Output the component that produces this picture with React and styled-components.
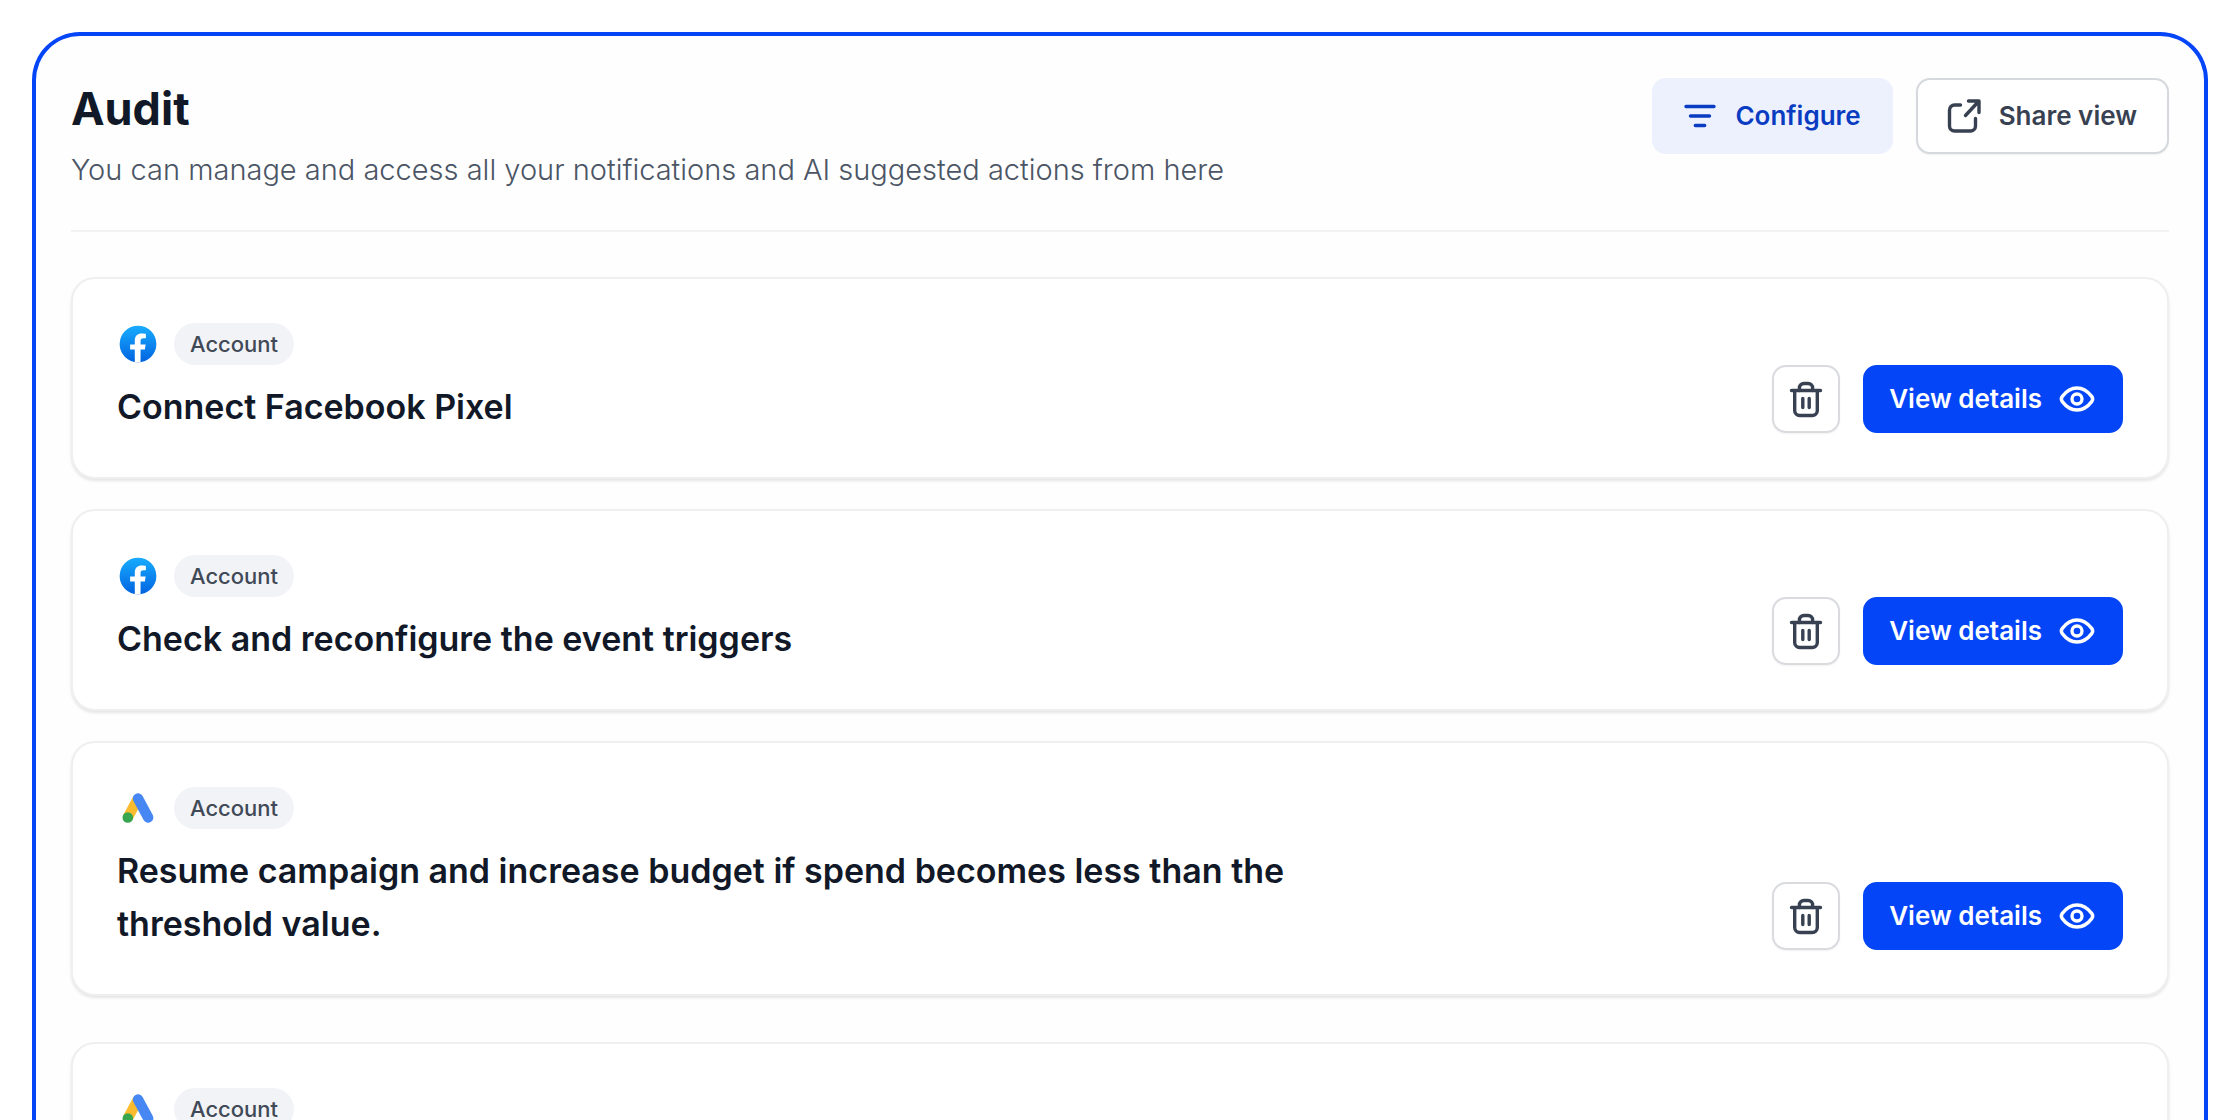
import {useState} from 'react';

import styled, {createGlobalStyle, css} from 'styled-components';

const GlobalStyle = createGlobalStyle`
  *, *::before, *::after {
    box-sizing: border-box;
  }

  body {
    margin: 0;
    background: #ffffff;
    color: #111827;
    font-family: Inter, "Liberation Sans", sans-serif;
  }
`;

const Page = styled.div`
  height: 100vh;
  padding: 32px 32px 0;
  overflow: hidden;
`;

const Frame = styled.main`
  height: 100%;
  padding: 42px 35px 0;
  border: 4px solid #0345f7;
  border-bottom: 0;
  border-radius: 48px 48px 0 0;
  background: #fefefe;
  overflow: hidden;
`;

const Header = styled.header`
  display: flex;
  align-items: flex-start;
  justify-content: space-between;
  gap: 32px;
  padding-bottom: 40px;
  border-bottom: 2px solid #f1f2f3;
`;

const PageTitle = styled.h1`
  margin: 0;
  font-size: 45px;
  line-height: 62px;
  font-weight: 700;
`;

const Subtitle = styled.p`
  margin: 10px 0 0;
  color: #4b5565;
  font-size: 29px;
  line-height: 40px;
  font-weight: 300;
`;

const HeaderActions = styled.div`
  display: flex;
  flex-shrink: 0;
  gap: 23px;
`;

const Button = styled.button`
  display: inline-flex;
  align-items: center;
  justify-content: center;
  gap: 15px;
  height: 68px;
  padding: 0 24px;
  border: 2px solid transparent;
  border-radius: 14px;
  font-family: inherit;
  font-size: 26px;
  line-height: 36px;
  font-weight: 600;
  white-space: nowrap;
  cursor: pointer;

  ${props => props.$variant === 'primary' && css`
    background: #0345f7;
    border-color: #0345f7;
    color: #ffffff;
  `}

  ${props => props.$variant === 'soft' && css`
    height: 76px;
    padding: 0 30px 0 26px;
    background: #edf1fe;
    border-color: #edf1fe;
    color: #0a3cc2;
  `}

  ${props => props.$variant === 'outline' && css`
    height: 76px;
    padding: 0 30px 0 26px;
    background: #ffffff;
    border-color: #d5d8dc;
    color: #384152;
    box-shadow: 0 1px 2px rgba(16, 24, 40, 0.06);
  `}
`;

const IconButton = styled(Button)`
  width: 68px;
  padding: 0;
  background: #ffffff;
  border-color: #d9dbdf;
  color: #384152;
  box-shadow: 0 1px 2px rgba(16, 24, 40, 0.06);
`;

const Groups = styled.div`
  display: grid;
  gap: 46px;
  padding-top: 45px;
`;

const CardList = styled.div`
  display: grid;
  gap: 30px;
`;

const CardBox = styled.article`
  display: flex;
  align-items: flex-end;
  justify-content: space-between;
  gap: 32px;
  padding: 44px;
  border: 2px solid #eeeff0;
  border-radius: 24px;
  background: #ffffff;
  box-shadow: 0 2px 3px rgba(0, 0, 0, 0.1);
`;

const CardBody = styled.div`
  max-width: 1200px;
`;

const Meta = styled.div`
  display: flex;
  align-items: center;
  gap: 15px;
`;

const Chip = styled.span`
  padding: 0 16px;
  border-radius: 21px;
  background: #f1f3f7;
  color: #414957;
  font-size: 22px;
  line-height: 42px;
  font-weight: 500;
`;

const CardTitle = styled.h2`
  min-height: 53px;
  margin: 15px 0 0;
  font-size: 34px;
  line-height: 53px;
  font-weight: 600;
`;

const CardActions = styled.div`
  display: flex;
  flex-shrink: 0;
  gap: 23px;
`;

const StrokeIcon = ({children}) => (
  <svg
    width="40"
    height="40"
    viewBox="0 0 40 40"
    fill="none"
    stroke="currentColor"
    strokeWidth="3.4"
    strokeLinecap="round"
    strokeLinejoin="round"
    aria-hidden="true"
  >
    {children}
  </svg>
);

const FilterIcon = () => (
  <StrokeIcon>
    <path d="M6 10.500h28M10.500 20h19M15.300 29.500h9.400"/>
  </StrokeIcon>
);

const ShareIcon = () => (
  <StrokeIcon>
    <path d="M16.500 9H10.500a5 5 0 0 0-5 5V30a5 5 0 0 0 5 5h16a5 5 0 0 0 5-5v-7.500"/>
    <path d="M24.500 5h10.500v11.500M34.500 5.500 21.500 19.500"/>
  </StrokeIcon>
);

const TrashIcon = () => (
  <StrokeIcon>
    <path d="M5.500 11.500h29M8.700 11.500V31.500a5 5 0 0 0 5 5h12.600a5 5 0 0 0 5-5V11.500"/>
    <path d="M13.400 11.500V9a4.500 4.500 0 0 1 4.500-4.500h4.200a4.500 4.500 0 0 1 4.500 4.500v2.500"/>
    <path d="M16.800 19.500v9M23.200 19.500v9"/>
  </StrokeIcon>
);

const EyeIcon = () => (
  <StrokeIcon>
    <path d="M5.300 22.600C4 20.900 4 19.100 5.300 17.400 8.800 12.800 13.700 9 20 9s11.200 3.800 14.700 8.400c1.300 1.700 1.300 3.500 0 5.200C31.200 27.200 26.300 31 20 31S8.800 27.200 5.300 22.600Z"/>
    <circle cx="20" cy="20" r="5"/>
  </StrokeIcon>
);

const FacebookLogo = () => (
  <svg width="42" height="42" viewBox="0 0 32 32" role="img" aria-label="Facebook">
    <defs>
      <linearGradient id="facebook-blue" x1="16" y1="2" x2="16" y2="30" gradientUnits="userSpaceOnUse">
        <stop stopColor="#18acfe"/>
        <stop offset="1" stopColor="#0163e0"/>
      </linearGradient>
    </defs>
    <circle cx="16" cy="16" r="14" fill="url(#facebook-blue)"/>
    <path
      fill="#ffffff"
      d="M21.2137 20.2816L21.8356 16.3301H17.9452V13.767C17.9452 12.6857 18.4877 11.6311 20.2302 11.6311H22V8.26699C22 8.26699 20.3945 8 18.8603 8C15.6548 8 13.5617 9.89294 13.5617 13.3184V16.3301H10V20.2816H13.5617V29.8345C14.2767 29.944 15.0082 30 15.7534 30C16.4986 30 17.2302 29.944 17.9452 29.8345V20.2816H21.2137Z"
    />
  </svg>
);

const GoogleAdsLogo = () => (
  <svg width="42" height="42" viewBox="0 0 42 42" fill="none" strokeWidth="10.4" role="img" aria-label="Google Ads">
    <path d="M21 11.500 10.800 30.500" stroke="#fabb2f"/>
    <path d="M21 11.500 31.200 30.500" stroke="#4687f3" strokeLinecap="round"/>
    <circle cx="10.800" cy="30.500" r="5.300" fill="#37a64e"/>
  </svg>
);

const logos = {
  facebook: FacebookLogo,
  google: GoogleAdsLogo,
};

const initialGroups = [
  [
    {id: 1, source: 'facebook', title: 'Connect Facebook Pixel'},
    {id: 2, source: 'facebook', title: 'Check and reconfigure the event triggers'},
    {
      id: 3,
      source: 'google',
      title: 'Resume campaign and increase budget if spend becomes less than the threshold value.',
    },
  ],
  [
    {id: 4, source: 'google', title: ''},
  ],
];

const AuditCard = ({item, onDelete}) => {
  const Logo = logos[item.source];

  return (
    <CardBox>
      <CardBody>
        <Meta>
          <Logo/>
          <Chip>Account</Chip>
        </Meta>
        <CardTitle>{item.title}</CardTitle>
      </CardBody>
      <CardActions>
        <IconButton type="button" aria-label="Delete" onClick={() => onDelete(item.id)}>
          <TrashIcon/>
        </IconButton>
        <Button type="button" $variant="primary">
          View details
          <EyeIcon/>
        </Button>
      </CardActions>
    </CardBox>
  );
};

const App = () => {
  const [groups, setGroups] = useState(initialGroups);

  const deleteItem = id => {
    setGroups(groups.map(group => group.filter(item => item.id !== id)));
  };

  return (
    <Page>
      <GlobalStyle/>
      <Frame>
        <Header>
          <div>
            <PageTitle>Audit</PageTitle>
            <Subtitle>You can manage and access all your notifications and AI suggested actions from here</Subtitle>
          </div>
          <HeaderActions>
            <Button type="button" $variant="soft">
              <FilterIcon/>
              Configure
            </Button>
            <Button type="button" $variant="outline">
              <ShareIcon/>
              Share view
            </Button>
          </HeaderActions>
        </Header>
        <Groups>
          {groups.map((group, index) => (
            <CardList key={index}>
              {group.map(item => (
                <AuditCard key={item.id} item={item} onDelete={deleteItem}/>
              ))}
            </CardList>
          ))}
        </Groups>
      </Frame>
    </Page>
  );
}

export default App;
